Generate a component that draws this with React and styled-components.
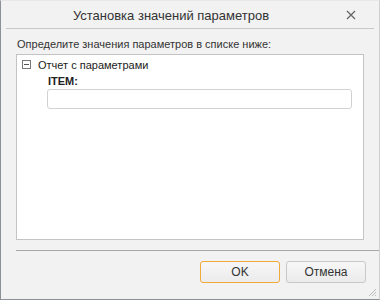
import React from "react";
import styled, { createGlobalStyle } from "styled-components";

const Global = createGlobalStyle`
  html, body { margin: 0; padding: 0; background: #f2f2f2; }
  * { box-sizing: border-box; }
`;

const Dialog = styled.div`
  width: 380px;
  height: 300px;
  background: #f2f2f2;
  border-left: 1px solid #8c9199;
  border-bottom: 1px solid #8c9199;
  border-right: 1px solid #d0d0d0;
  border-top: 1px solid #e8e8e8;
  display: flex;
  flex-direction: column;
  font-family: "Liberation Sans", Arial, sans-serif;
  color: #222;
  position: relative;
`;

const TitleBar = styled.div`
  height: 28px;
  display: flex;
  align-items: center;
  justify-content: center;
  position: relative;
  font-size: 13px;
  color: #333;
  border-bottom: 1px solid #c8c8c8;
  margin: 0 5px;
  padding: 2px 38px 0 0;
`;

const Close = styled.span`
  position: absolute;
  right: 18px;
  top: 9px;
  width: 10px;
  height: 10px;
  display: flex;
`;

const Body = styled.div`
  flex: 1;
  display: flex;
  flex-direction: column;
  padding: 7px 15px 0 15px;
`;

const Label = styled.div`
  font-size: 11px;
  color: #333;
  height: 16px;
  line-height: 16px;
  padding-left: 1px;
`;

const TreeBox = styled.div`
  margin-top: 2px;
  height: 186px;
  background: #fff;
  border: 1px solid #c4c4c4;
  padding: 3px 0 0 5px;
`;

const Node = styled.div`
  display: flex;
  align-items: center;
  font-size: 11px;
  color: #222;
  height: 13px;
`;

const Toggle = styled.span`
  width: 9px;
  height: 9px;
  border: 1px solid #777;
  position: relative;
  margin-right: 7px;
  &::after {
    content: "";
    position: absolute;
    left: 1px;
    right: 1px;
    top: 3px;
    height: 1px;
    background: #555;
  }
`;

const Params = styled.div`
  padding-left: 25px;
  padding-top: 4px;
  padding-right: 11px;
`;

const ParamName = styled.div`
  font-size: 11px;
  font-weight: bold;
  color: #222;
  padding-left: 1px;
  height: 13px;
  line-height: 13px;
`;

const Input = styled.div`
  margin-top: 1px;
  height: 20px;
  border: 1px solid #d2d2d2;
  border-radius: 3px;
  background: #fff;
`;

const Divider = styled.div`
  margin-top: 10px;
  height: 1px;
  background: #a8a8a8;
  margin-right: -15px;
`;

const Footer = styled.div`
  display: flex;
  justify-content: flex-end;
  gap: 6px;
  padding-top: 10px;
  margin-right: -2px;
`;

const Button = styled.div`
  width: 80px;
  height: 22px;
  border: 1px solid ${(p) => (p.$primary ? "#f2a93b" : "#c8c8c8")};
  border-radius: 3px;
  background: linear-gradient(#f7f7f7, #ebebeb);
  display: flex;
  align-items: center;
  justify-content: center;
  font-size: 12px;
  color: #333;
`;

const Grip = styled.svg`
  position: absolute;
  right: 2px;
  bottom: 2px;
`;

export default function App() {
  return (
    <>
      <Global />
      <Dialog>
        <TitleBar>
          Установка значений параметров
          <Close>
            <svg width="10" height="10" viewBox="0 0 10 10">
              <path d="M1 1 L9 9 M9 1 L1 9" stroke="#666" strokeWidth="1.3" />
            </svg>
          </Close>
        </TitleBar>
        <Body>
          <Label>Определите значения параметров в списке ниже:</Label>
          <TreeBox>
            <Node>
              <Toggle />
              Отчет с параметрами
            </Node>
            <Params>
              <ParamName>ITEM:</ParamName>
              <Input />
            </Params>
          </TreeBox>
          <Divider />
          <Footer>
            <Button $primary>OK</Button>
            <Button>Отмена</Button>
          </Footer>
        </Body>
        <Grip width="10" height="10" viewBox="0 0 10 10">
          <path d="M9 2 L2 9 M9 5 L5 9 M9 8 L8 9" stroke="#bbb" strokeWidth="1" />
        </Grip>
      </Dialog>
    </>
  );
}
